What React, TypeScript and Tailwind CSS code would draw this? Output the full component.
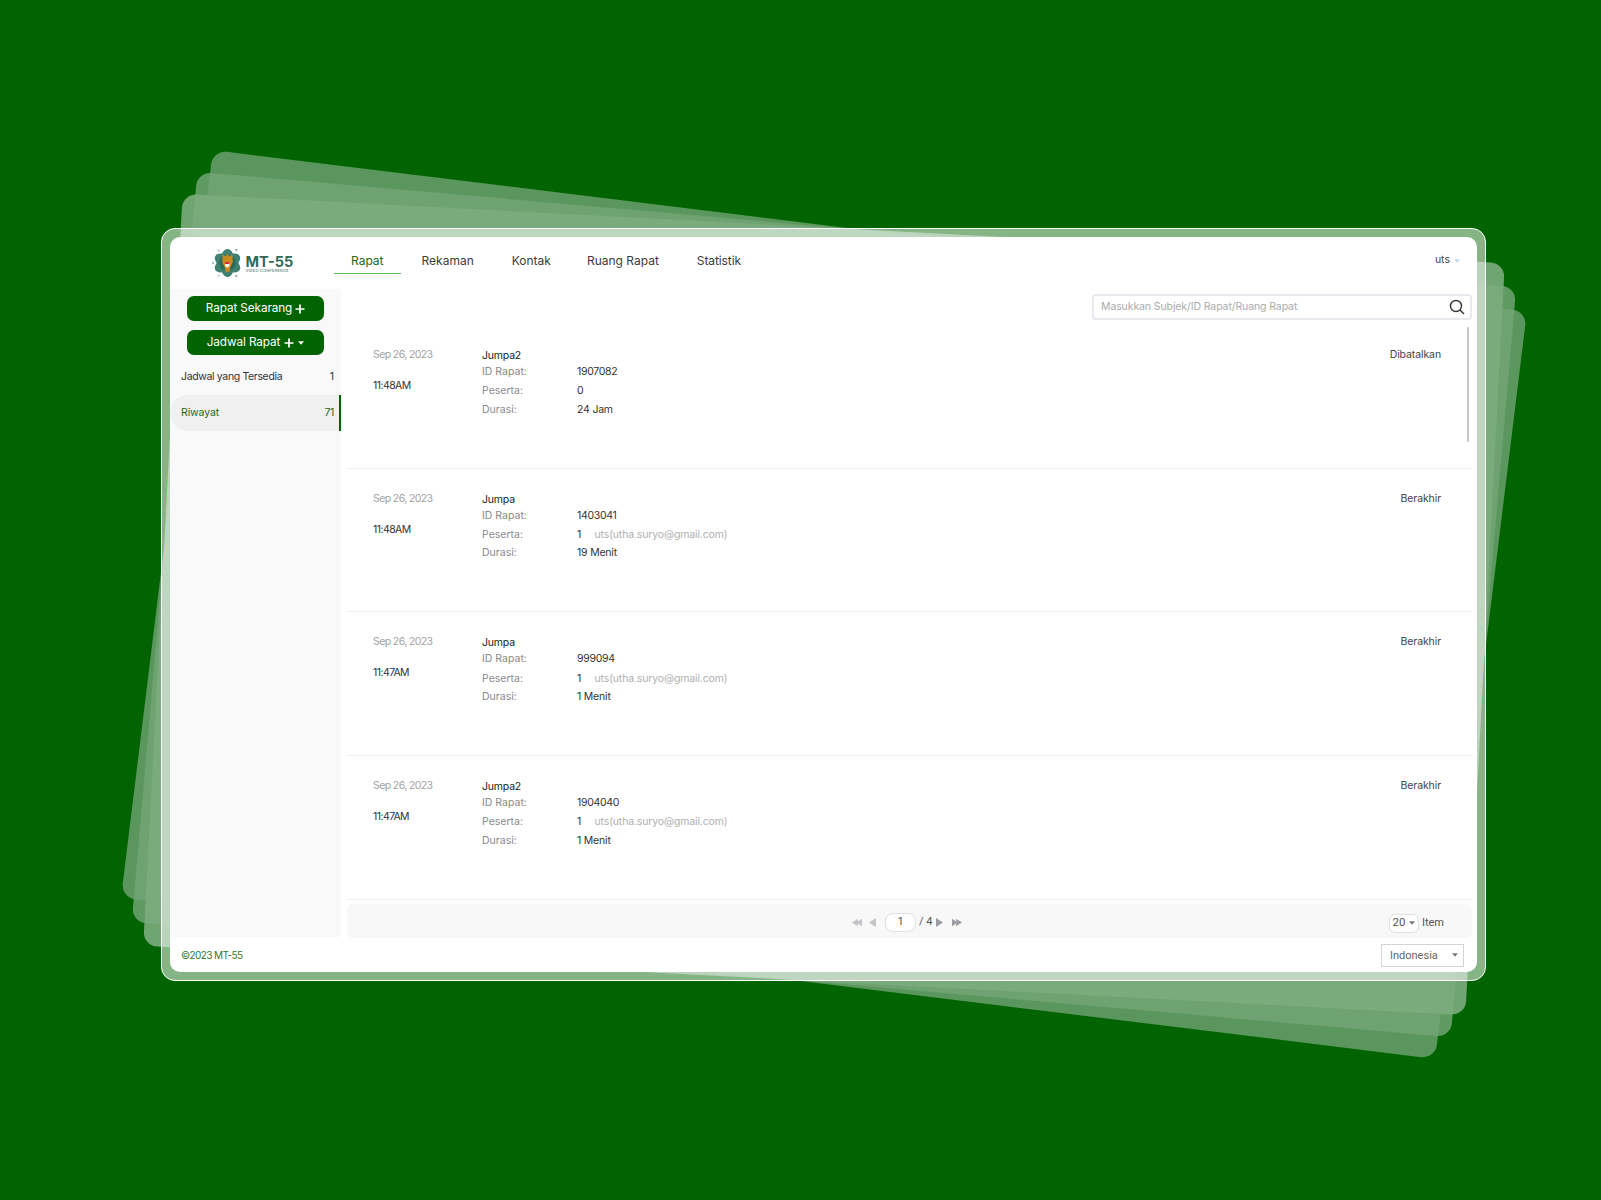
import React from "react";

const F = "font-['Inter','Liberation_Sans',sans-serif]";

function Logo() {
  return (
    <div className="flex items-center gap-[3px] w-[90px]">
      <svg width="31" height="32" viewBox="0 0 32 32">
        <g fill="#3f8070">
          <ellipse cx="16" cy="16" rx="7.5" ry="14.5" />
          <ellipse cx="16" cy="16" rx="7.5" ry="14.5" transform="rotate(60 16 16)" />
          <ellipse cx="16" cy="16" rx="7.5" ry="14.5" transform="rotate(120 16 16)" />
        </g>
        <circle cx="16" cy="16" r="8.5" fill="#2c6a5c" />
        <g fill="#9fbdb3">
          <circle cx="1.2" cy="16" r="1.2" />
          <circle cx="25" cy="2.5" r="1.3" />
          <circle cx="25" cy="29.5" r="1.3" />
          <circle cx="7" cy="3" r="1" />
          <circle cx="7" cy="29" r="1" />
        </g>
        <path d="M16 6 L17.5 9 L21 7.5 L21.5 15 L19 20 L18 25 L14 25 L13 20 L10.5 15 L11 7.5 L14.5 9 Z" fill="#c98a1e" />
        <path d="M13.5 15 H18 V19 L15.8 21 L13.5 19 Z" fill="#ffffff" />
        <path d="M13.5 15 H18 V17 H13.5 Z" fill="#d8232a" />
      </svg>
      <div className="flex flex-col">
        <span className="text-[14.5px] leading-[15px] font-bold text-[#2c6a5c] whitespace-nowrap">MT-55</span>
        <span className="text-[4px] leading-[4px] font-semibold text-[#7a9a92] tracking-[0.15px] whitespace-nowrap">VIDEO CONFERENCE</span>
      </div>
    </div>
  );
}

function Triangle({ className }: { className: string }) {
  return (
    <svg width="6" height="4" viewBox="0 0 7 4" className={className}>
      <path d="M0 0H7L3.5 4Z" fill="currentColor" />
    </svg>
  );
}

function PlusIcon() {
  return (
    <svg width="10" height="10" viewBox="0 0 10 10">
      <path d="M5 0.5V9.5M0.5 5H9.5" stroke="#fff" strokeWidth="1.7" />
    </svg>
  );
}

const rows = [
  { time: "11:48AM", title: "Jumpa2", id: "1907082", count: "0", email: "", dur: "24 Jam", status: "Dibatalkan" },
  { time: "11:48AM", title: "Jumpa", id: "1403041", count: "1", email: "uts(utha.suryo@gmail.com)", dur: "19 Menit", status: "Berakhir" },
  { time: "11:47AM", title: "Jumpa", id: "999094", count: "1", email: "uts(utha.suryo@gmail.com)", dur: "1 Menit", status: "Berakhir" },
  { time: "11:47AM", title: "Jumpa2", id: "1904040", count: "1", email: "uts(utha.suryo@gmail.com)", dur: "1 Menit", status: "Berakhir" },
];

function Row({ r }: { r: (typeof rows)[number] }) {
  return (
    <div className="h-[143.6px] border-b border-[#f0f0f0] flex pl-[26.5px] pr-[31px] pt-[21px] text-[10.5px] text-[#333]">
      <div className="w-[109px] shrink-0">
        <div className="h-[17px] leading-[18px] text-[#a3a3a3] tracking-[-0.6px]">Sep 26, 2023</div>
        <div className="mt-[15px] h-[16px] leading-[16px] tracking-[-0.55px]">{r.time}</div>
      </div>
      <div className="flex-1">
        <div className="h-[18px] leading-[20px] text-[#222] tracking-[-0.2px]">{r.title}</div>
        <div className="flex h-[18.3px] leading-[16px]">
          <span className="w-[95px] text-[#8a8a8a]">ID Rapat:</span>
          <span className="tracking-[-0.3px]">{r.id}</span>
        </div>
        <div className="flex h-[18.3px] leading-[17.5px]">
          <span className="w-[95px] text-[#8a8a8a]">Peserta:</span>
          <span className="w-[17.5px]">{r.count}</span>
          <span className="text-[#b0b0b0] tracking-[-0.15px]">{r.email}</span>
        </div>
        <div className="flex h-[18.3px] leading-[18px]">
          <span className="w-[95px] text-[#8a8a8a]">Durasi:</span>
          <span className="tracking-[-0.2px]">{r.dur}</span>
        </div>
      </div>
      <div className="leading-[18px] text-[#444] tracking-[-0.1px]">{r.status}</div>
    </div>
  );
}

function PagerIcon({ dir, double, color }: { dir: "l" | "r"; double?: boolean; color: string }) {
  const d = dir === "l" ? "M7 0V9L0 4.5Z" : "M0 0V9L7 4.5Z";
  const d2 = dir === "l" ? "M12 0V9L5 4.5Z" : "M5 0V9L12 4.5Z";
  return (
    <svg width={double ? 10 : 7} height="9" viewBox={double ? "0 0 12 9" : "0 0 7 9"}>
      <path d={d} fill={color} />
      {double && <path d={d2} fill={color} />}
    </svg>
  );
}

export default function App() {
  return (
    <div className={`relative w-full h-[1200px] overflow-hidden bg-[#016401] pt-[228px] pl-[161px] ${F}`}>
      <div className="relative w-[1325px] h-[753px]">
        <div className="absolute top-0 bottom-0 left-[1px] right-0 rounded-[14px] rotate-[7deg] bg-[#5c965f]" />
        <div className="absolute top-0 bottom-0 left-[1px] right-0 rounded-[14px] rotate-[5deg] bg-[rgba(113,164,117,0.84)]" />
        <div className="absolute top-0 bottom-0 left-[1px] right-0 rounded-[14px] rotate-[3deg] bg-[rgba(123,172,125,0.91)]" />
        <div className="relative w-full h-full rounded-[14px] border border-white bg-[rgba(255,255,255,0.52)] p-[8px]">
          <div className="w-full h-full rounded-[10px] bg-white flex flex-col overflow-hidden">
            {/* Header */}
            <div className="h-[51.5px] shrink-0 flex items-start">
              <div className="w-[164px] pl-[41.5px] pt-[10px] shrink-0">
                <Logo />
              </div>
              <nav className="flex gap-[4px] text-[12px] text-[#3c3c3c]">
                <div className="h-[37px] px-[17px] pt-[14.5px] leading-[18px] text-[#1a6b1a] border-b border-[#5cb85c]">Rapat</div>
                <div className="h-[37px] px-[17px] pt-[14.5px] leading-[18px]">Rekaman</div>
                <div className="h-[37px] pl-[17px] pr-[15px] pt-[14.5px] leading-[18px]">Kontak</div>
                <div className="h-[37px] px-[17px] pt-[14.5px] leading-[18px]">Ruang Rapat</div>
                <div className="h-[37px] px-[17px] pt-[14.5px] leading-[18px] tracking-[-0.1px]">Statistik</div>
              </nav>
              <div className="ml-auto pr-[17px] pt-[15px] flex items-center gap-[4px] text-[10.5px] text-[#444]">
                <span className="leading-[16px]">uts</span>
                <Triangle className="text-[#bcdcf5] mt-[2px]" />
              </div>
            </div>

            {/* Body */}
            <div className="flex-1 flex min-h-0">
              <aside className="w-[171px] shrink-0 bg-[#f9f9f9] rounded-b-[6px] pt-[7.5px] flex flex-col text-[10.5px]">
                <div className="flex flex-col gap-[9px] pl-[17px] w-[154px]">
                  <button className="h-[25px] rounded-[7px] bg-[#016401] text-white text-[11.75px] tracking-[-0.1px] flex items-center justify-center gap-[3px]">
                    Rapat Sekarang <PlusIcon />
                  </button>
                  <button className="h-[25px] rounded-[7px] bg-[#016401] text-white text-[11.75px] tracking-[-0.1px] flex items-center justify-center gap-[4px]">
                    Jadwal Rapat <PlusIcon />
                    <Triangle className="text-white" />
                  </button>
                </div>
                <div className="flex justify-between pl-[11px] pr-[7px] mt-[12px] h-[20px] leading-[20px] text-[#333]">
                  <span className="tracking-[-0.35px]">Jadwal yang Tersedia</span>
                  <span>1</span>
                </div>
                <div className="flex justify-between items-center pl-[11px] pr-[5px] mt-[7.5px] h-[36px] bg-[#f0f0f0] rounded-l-[18px] border-r-[2.5px] border-[#016401] text-[#1a6b1a]">
                  <span className="tracking-[-0.1px]">Riwayat</span>
                  <span className="tracking-[-0.4px]">71</span>
                </div>
              </aside>

              <main className="flex-1 flex flex-col min-w-0 pl-[5.5px] pr-[5px]">
                <div className="h-[36.7px] shrink-0 flex justify-end pt-[5px]">
                  <div className="w-[380px] h-[26px] rounded-[4px] border-2 border-[#e8e8ee] flex items-center justify-between pl-[7px] pr-[5px]">
                    <span className="text-[10.5px] tracking-[-0.1px] text-[#ababab]">Masukkan Subjek/ID Rapat/Ruang Rapat</span>
                    <svg width="16" height="16" viewBox="0 0 16 16" fill="none" stroke="#333" strokeWidth="1.4">
                      <circle cx="7" cy="7" r="5.5" />
                      <path d="M11 11L15 15" />
                    </svg>
                  </div>
                </div>
                <div className="relative flex-1 min-h-0">
                  <div className="absolute right-[3px] top-[2px] w-[2px] h-[115px] bg-[#c6c6c6] rounded-full" />
                  {rows.map((r, i) => (
                    <Row key={i} r={r} />
                  ))}
                </div>
                <div className="h-[34px] shrink-0 bg-[#f8f8f8] rounded-[6px] relative flex items-center justify-center pt-[4px] pr-[4px] text-[11px] text-[#555] font-['Roboto',sans-serif]">
                  <div className="flex items-center">
                    <PagerIcon dir="l" double color="#c4c4c8" />
                    <div className="ml-[7px]"><PagerIcon dir="l" color="#c4c4c8" /></div>
                    <div className="ml-[9px] w-[31px] h-[19px] rounded-[8px] border border-[#e0e0e0] bg-white flex items-center justify-center">1</div>
                    <span className="ml-[3px]">/ 4</span>
                    <div className="ml-[4px]"><PagerIcon dir="r" color="#9c9ca2" /></div>
                    <div className="ml-[9px]"><PagerIcon dir="r" double color="#9c9ca2" /></div>
                  </div>
                  <div className="absolute right-[28px] top-[10px] flex items-center gap-[3px]">
                    <div className="w-[30px] h-[19px] rounded-[6px] border border-[#e0e0e0] bg-white flex items-center justify-center gap-[4px] text-[11.5px]">
                      20 <Triangle className="text-[#777]" />
                    </div>
                    <span>Item</span>
                  </div>
                </div>
              </main>
            </div>

            {/* Footer */}
            <div className="h-[34.5px] shrink-0 flex items-center justify-between pl-[11px] pr-[13px] pt-[2px]">
              <span className="text-[10px] tracking-[-0.6px] text-[#2f7a2f]">©2023 MT-55</span>
              <div className="w-[83px] h-[23px] border border-[#d4d4d4] flex items-center justify-between pl-[8px] pr-[5px] text-[11px] text-[#666] font-['Roboto',sans-serif]">
                Indonesia <Triangle className="text-[#777] -mt-[2px]" />
              </div>
            </div>
          </div>
        </div>
      </div>
    </div>
  );
}
